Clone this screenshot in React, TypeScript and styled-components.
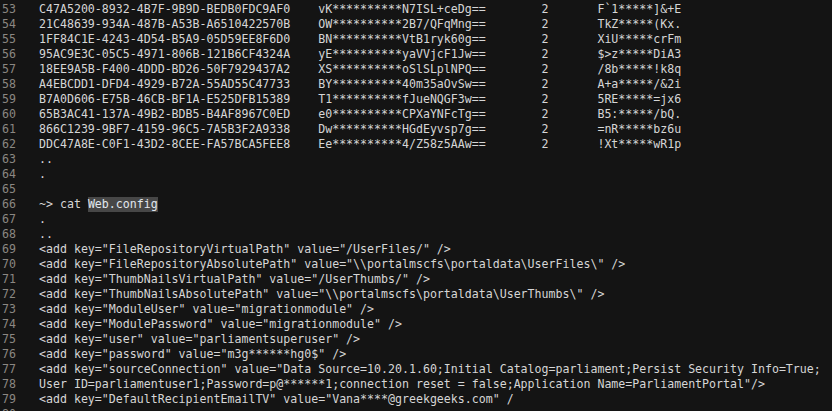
import React from "react";
import styled, { createGlobalStyle } from "styled-components";

const Global = createGlobalStyle`
  html, body {
    margin: 0;
    padding: 0;
    background: #141414;
  }
`;

const Terminal = styled.div`
  width: 832px;
  height: 411px;
  overflow: hidden;
  background: #141414;
  padding-top: 2px;
  box-sizing: border-box;
  font-family: "DejaVu Sans Mono", "Liberation Mono", monospace;
  font-size: 11.6px;
  line-height: 15px;
`;

const Row = styled.div`
  display: flex;
  height: 15px;
  white-space: pre;
`;

const LineNo = styled.span`
  flex: 0 0 39px;
  box-sizing: border-box;
  padding-left: 2px;
  color: #8b8782;
`;

const Code = styled.span`
  color: #d6d6d6;
`;

const Highlight = styled.span`
  background: #474747;
  color: #e2e8ef;
  display: inline-block;
  height: 15px;
`;

const tableRows: [string, string, string, string][] = [
  ["C47A5200-8932-4B7F-9B9D-BEDB0FDC9AF0", "vK**********N7ISL+ceDg==", "2", "F`1*****]&+E"],
  ["21C48639-934A-487B-A53B-A6510422570B", "OW**********2B7/QFqMng==", "2", "TkZ*****(Kx."],
  ["1FF84C1E-4243-4D54-B5A9-05D59EE8F6D0", "BN**********VtB1ryk60g==", "2", "XiU*****crFm"],
  ["95AC9E3C-05C5-4971-806B-121B6CF4324A", "yE**********yaVVjcF1Jw==", "2", "$>z*****DiA3"],
  ["18EE9A5B-F400-4DDD-BD26-50F7929437A2", "XS**********oSlSLplNPQ==", "2", "/8b*****!k8q"],
  ["A4EBCDD1-DFD4-4929-B72A-55AD55C47733", "BY**********40m35aOvSw==", "2", "A+a*****/&2i"],
  ["B7A0D606-E75B-46CB-BF1A-E525DFB15389", "T1**********fJueNQGF3w==", "2", "5RE*****=jx6"],
  ["65B3AC41-137A-49B2-BDB5-B4AF8967C0ED", "e0**********CPXaYNFcTg==", "2", "B5:*****/bQ."],
  ["866C1239-9BF7-4159-96C5-7A5B3F2A9338", "Dw**********HGdEyvsp7g==", "2", "=nR*****bz6u"],
  ["DDC47A8E-C0F1-43D2-8CEE-FA57BCA5FEE8", "Ee**********4/Z58z5AAw==", "2", "!Xt*****wR1p"],
];

const formatRow = (r: [string, string, string, string]) =>
  r[0].padEnd(40, " ") + r[1].padEnd(32, " ") + r[2].padEnd(8, " ") + r[3];

const configLines = [
  '<add key="FileRepositoryVirtualPath" value="/UserFiles/" />',
  '<add key="FileRepositoryAbsolutePath" value="\\\\portalmscfs\\portaldata\\UserFiles\\" />',
  '<add key="ThumbNailsVirtualPath" value="/UserThumbs/" />',
  '<add key="ThumbNailsAbsolutePath" value="\\\\portalmscfs\\portaldata\\UserThumbs\\" />',
  '<add key="ModuleUser" value="migrationmodule" />',
  '<add key="ModulePassword" value="migrationmodule" />',
  '<add key="user" value="parliamentsuperuser" />',
  '<add key="password" value="m3g******hg0$" />',
  '<add key="sourceConnection" value="Data Source=10.20.1.60;Initial Catalog=parliament;Persist Security Info=True;',
  'User ID=parliamentuser1;Password=p@******1;connection reset = false;Application Name=ParliamentPortal"/>',
  '<add key="DefaultRecipientEmailTV" value="Vana****@greekgeeks.com" /',
  '',
];

type Line = { n: number; content: React.ReactNode };

const lines: Line[] = [];
let n = 53;
tableRows.forEach((r) => lines.push({ n: n++, content: formatRow(r) }));
lines.push({ n: n++, content: ".." });
lines.push({ n: n++, content: "." });
lines.push({ n: n++, content: "" });
lines.push({
  n: n++,
  content: (
    <>
      {"~> cat "}
      <Highlight>Web.config</Highlight>
    </>
  ),
});
lines.push({ n: n++, content: "." });
lines.push({ n: n++, content: ".." });
configLines.forEach((c) => lines.push({ n: n++, content: c }));

export default function App() {
  return (
    <>
      <Global />
      <Terminal>
        {lines.map((l) => (
          <Row key={l.n}>
            <LineNo>{l.n}</LineNo>
            <Code>{l.content}</Code>
          </Row>
        ))}
      </Terminal>
    </>
  );
}
